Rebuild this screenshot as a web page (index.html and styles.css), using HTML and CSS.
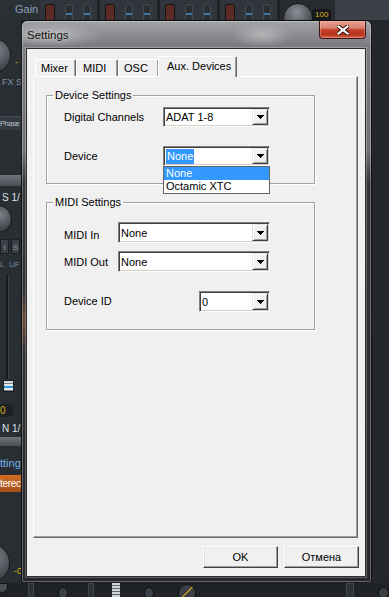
FILE: index.html
```html
<!DOCTYPE html>
<html lang="ru">
<head>
    <meta charset="UTF-8">
    <meta name="viewport" content="width=device-width, initial-scale=1.0">
    <title>Settings</title>
    <link rel="stylesheet" href="styles.css">
</head>
<body>
    <div class="mixer">
        <div class="top-strip">
            <span class="gain">Gain</span>
            <div class="chan"><i class="rec"></i><i class="fader"></i><i class="fader"></i></div>
            <div class="chan"><i class="rec"></i><i class="fader"></i><i class="fader"></i></div>
            <div class="chan"><i class="rec"></i><i class="fader"></i><i class="fader"></i></div>
            <div class="chan"><i class="rec"></i><i class="fader"></i><i class="fader"></i></div>
            <div class="master"><i class="big-knob"></i><span class="readout">100</span></div>
            <div class="top-rest"></div>
        </div>

        <div class="left-strip">
            <div class="knob-row"><i class="knob k35"></i><span class="dash">-</span></div>
            <span class="lbl fx">FX S</span>
            <span class="phase">Phase</span>
            <i class="strip-head"></i>
            <span class="lbl ch-name">S 1/</span>
            <i class="knob k28"></i>
            <div class="mini-btns"><i>I</i><i>S</i></div>
            <span class="lbl tiny">L&nbsp;&nbsp;UF</span>
            <i class="groove"></i>
            <i class="thumb"></i>
            <span class="zero">0</span>
            <span class="lbl ch-name n1">N 1/</span>
            <i class="strip-head short"></i>
            <span class="link">tting</span>
            <span class="stereo">terec</span>
            <div class="knob-row last"><i class="knob k40"></i><span class="dash">-0</span></div>
        </div>

        <div class="right-strip">
            <i class="r-box"></i>
            <i class="r-led"></i>
            <i class="r-box small"></i>
        </div>

        <div class="bottom-strip">
            <i class="b-knob edge"></i>
            <i class="b-slot"></i>
            <i class="b-knob"></i>
            <i class="b-slot"></i>
            <i class="b-thumb"></i>
            <i class="b-knob"></i>
            <i class="b-knob big"></i>
            <i class="b-slot wide"></i>
            <i class="b-knob"></i>
        </div>
    </div>

    <div class="window">
        <div class="titlebar">
            <span class="title">Settings</span>
            <span class="close">
                <svg width="12" height="10" viewBox="0 0 12 10">
                    <path d="M1.5 1.5l9 7M10.5 1.5l-9 7" stroke="#3b1710" stroke-width="4.2" stroke-linecap="square"/>
                    <path d="M1.5 1.5l9 7M10.5 1.5l-9 7" stroke="#fff" stroke-width="2.2" stroke-linecap="square"/>
                </svg>
            </span>
        </div>

        <div class="client">
            <div class="tabs">
                <span class="tab">Mixer</span>
                <span class="tab midi">MIDI</span>
                <span class="tab">OSC</span>
                <span class="tab active">Aux. Devices</span>
            </div>

            <div class="panel">
                <fieldset class="group">
                    <legend>Device Settings</legend>
                    <div class="row first">
                        <label class="w99">Digital Channels</label>
                        <div class="combo w107">
                            <span class="value">ADAT 1-8</span>
                            <span class="drop"><svg width="7" height="4" viewBox="0 0 7 4"><path d="M0 0h7v1H0zM1 1h5v1H1zM2 2h3v1H2zM3 3h1v1H3z"/></svg></span>
                        </div>
                    </div>
                    <div class="row gap19">
                        <label class="w99">Device</label>
                        <div class="combo w107">
                            <span class="value"><span class="sel">None</span></span>
                            <span class="drop"><svg width="7" height="4" viewBox="0 0 7 4"><path d="M0 0h7v1H0zM1 1h5v1H1zM2 2h3v1H2zM3 3h1v1H3z"/></svg></span>
                            <div class="dropdown">
                                <div class="item hl">None</div>
                                <div class="item">Octamic XTC</div>
                            </div>
                        </div>
                    </div>
                </fieldset>

                <fieldset class="group midi-group">
                    <legend>MIDI Settings</legend>
                    <div class="row first13">
                        <label class="w54 low">MIDI In</label>
                        <div class="combo tall w152">
                            <span class="value">None</span>
                            <span class="drop"><svg width="7" height="4" viewBox="0 0 7 4"><path d="M0 0h7v1H0zM1 1h5v1H1zM2 2h3v1H2zM3 3h1v1H3z"/></svg></span>
                        </div>
                    </div>
                    <div class="row gap9">
                        <label class="w54 low1">MIDI Out</label>
                        <div class="combo tall w152">
                            <span class="value">None</span>
                            <span class="drop"><svg width="7" height="4" viewBox="0 0 7 4"><path d="M0 0h7v1H0zM1 1h5v1H1zM2 2h3v1H2zM3 3h1v1H3z"/></svg></span>
                        </div>
                    </div>
                    <div class="row gap19">
                        <label class="w135">Device ID</label>
                        <div class="combo tall w71">
                            <span class="value">0</span>
                            <span class="drop"><svg width="7" height="4" viewBox="0 0 7 4"><path d="M0 0h7v1H0zM1 1h5v1H1zM2 2h3v1H2zM3 3h1v1H3z"/></svg></span>
                        </div>
                    </div>
                </fieldset>
            </div>

            <div class="actions">
                <button class="btn">OK</button>
                <button class="btn">Отмена</button>
            </div>
        </div>
    </div>
</body>
</html>
```

FILE: styles.css
```css
* { box-sizing: border-box; }
body { margin: 0; width: 389px; height: 597px; overflow: hidden; position: relative; background: #23272c; font-family: "Liberation Sans", Arial, sans-serif; }
i { display: block; font-style: normal; }

/* mixer behind the dialog */
.mixer { display: grid; grid-template-columns: 21px 351px 17px; grid-template-rows: 20px 563px 14px; height: 597px; }

.top-strip { grid-column: 1 / -1; display: flex; background: #2b3035; overflow: hidden; }
.gain { width: 40px; padding: 3px 0 0 15px; font-size: 11px; line-height: 12px; color: #8aa0b9; }
.chan { width: 60px; display: flex; padding: 4px 0 0 5px; background: #30353b; border-right: 3px solid #1e2226; }
.rec { width: 10px; height: 20px; background: #5b2c27; border: 1px solid #141414; border-radius: 2px; }
.fader { width: 8px; height: 20px; margin-left: 10px; background: linear-gradient(#2a2f34 0, #2a2f34 8px, #3c78a0 8px, #3c78a0 10px, #2a2f34 10px); border: 1px solid #444b52; border-radius: 3px; }
.fader + .fader { margin-left: 10px; }
.master { width: 55px; display: flex; padding: 3px 0 0 3px; background: #272b30; }
.big-knob { width: 30px; height: 30px; border-radius: 50%; background: radial-gradient(circle at 45% 30%, #8c9197, #4b5056 60%, #2b2f33); border: 1px solid #15181b; }
.readout { margin: 6px 0 0 -1px; padding: 0 3px; height: 11px; font-size: 8px; line-height: 11px; color: #d9b21e; background: #16191c; border-radius: 3px 3px 0 0; }
.top-rest { flex: 1; background: #3c4147; }

.left-strip { display: flex; flex-direction: column; align-items: flex-start; overflow: hidden; background: #292e33; }
.knob { flex: none; border-radius: 50%; background: radial-gradient(circle at 60% 35%, #7b8086, #474c52 55%, #25292d); border: 1px solid #16191c; }
.knob-row { display: flex; margin-top: 18px; }
.k35 { width: 35px; height: 35px; margin-left: -24px; }
.dash { margin: 19px 0 0 4px; font-size: 9px; line-height: 10px; color: #d9b21e; }
.lbl { font-size: 10px; line-height: 11px; color: #7f93a8; padding-left: 3px; white-space: nowrap; }
.fx { margin-top: 4px; font-size: 9px; padding-left: 2px; }
.phase { margin-top: 28px; width: 21px; height: 14px; font-size: 7.5px; letter-spacing: -0.4px; line-height: 13px; color: #b9c2cb; background: #353b42; border-top: 1px solid #454c53; white-space: nowrap; }
.strip-head { margin-top: 45px; width: 21px; height: 12px; background: linear-gradient(#70767c, #484e54); }
.ch-name { margin-top: 6px; color: #dfe3e7; padding-left: 2px; }
.k28 { width: 28px; height: 28px; margin: 2px 0 0 -16px; }
.mini-btns { display: flex; gap: 2px; margin-top: 6px; }
.mini-btns i { width: 9px; height: 15px; font-size: 8px; line-height: 15px; text-align: center; color: #8f9aa6; background: #3a4046; border: 1px solid #1b1e22; }
.tiny { margin-top: 6px; font-size: 8px; line-height: 9px; color: #75889c; padding-left: 0; }
.groove { margin: 6px 0 0 6px; width: 3px; height: 117px; background: #171a1d; border-right: 1px solid #3a4046; }
.thumb { margin: 1px 0 0 3px; width: 11px; height: 13px; border: 1px solid #1a1d20; background: linear-gradient(#d8dcdf 0 2px, #7a8086 2px 3px, #e6e9eb 3px 5px, #2a9ad8 5px 7px, #e6e9eb 7px 9px, #7a8086 9px 10px, #cfd3d6 10px); }
.zero { margin-top: 12px; width: 14px; height: 13px; font-size: 10px; line-height: 13px; color: #d9b21e; background: #1d2024; border-radius: 0 6px 6px 0; }
.n1 { margin-top: 6px; }
.strip-head.short { margin-top: 3px; height: 10px; }
.link { margin-top: 10px; font-size: 11px; line-height: 14px; color: #72b1e8; white-space: nowrap; }
.stereo { margin-top: 5px; width: 21px; height: 17px; font-size: 10px; letter-spacing: -0.3px; line-height: 17px; color: #fff; background: linear-gradient(#d36d24, #a6501a); white-space: nowrap; }
.knob-row.last { margin-top: 51px; }
.k40 { width: 40px; height: 40px; margin-left: -30px; }
.knob-row.last .dash { margin: 23px 0 0 4px; }

.right-strip { display: flex; flex-direction: column; align-items: flex-end; background: #22262a; border-left: 4px solid #1a1d20; }
.r-box { margin-top: 450px; width: 9px; height: 28px; background: #353a40; border: 1px solid #17191c; border-radius: 3px 0 0 3px; }
.r-led { margin-top: 14px; width: 7px; height: 9px; background: #2e5e38; border-radius: 4px 0 0 4px; }
.r-box.small { margin-top: 14px; height: 18px; }

.bottom-strip { grid-column: 1 / -1; display: flex; align-items: flex-start; background: #1f2327; overflow: hidden; }
.b-knob { width: 12px; height: 12px; margin: 4px 0 0 24px; border-radius: 50%; background: #3b4046; border: 1px solid #111; }
.b-knob.edge { margin-left: -4px; width: 14px; height: 10px; margin-top: 0; border-radius: 0 0 8px 8px; background: #4a4f55; }
.b-knob.big { width: 20px; height: 18px; margin-top: 1px; background: linear-gradient(135deg, #3b4046 45%, #b8941c 46%, #b8941c 50%, #3b4046 51%); }
.b-slot { width: 6px; height: 14px; margin: 0 0 0 20px; background: #2c3136; border: 1px solid #3f454b; border-bottom: 0; }
.b-slot.wide { margin-left: 150px; width: 10px; }
.b-thumb { width: 9px; height: 14px; margin-left: 18px; background: repeating-linear-gradient(#d0d4d7 0 2px, #60666c 2px 3px); }

/* dialog window */
.window { position: absolute; left: 21px; top: 20px; width: 351px; height: 563px; display: flex; flex-direction: column; padding: 0 5px 5px 4px; border: 1px solid rgba(12, 12, 14, 0.9); border-radius: 6px 6px 2px 2px; box-shadow: inset 0 0 0 1px rgba(255, 255, 255, 0.3); background: radial-gradient(ellipse 50px 12px at 30px 14px, rgba(205, 205, 205, 0.7), transparent), radial-gradient(ellipse 30px 12px at 240px 14px, rgba(215, 215, 215, 0.55), transparent), radial-gradient(ellipse 8px 30px at 3px 300px, rgba(190, 110, 50, 0.45), transparent), linear-gradient(#a2a2a6 0, #7c7c82 24px, #707076 130px, #34343a 162px, #26262c 100%); }
.titlebar { height: 27px; flex: none; display: flex; align-items: center; justify-content: space-between; padding-left: 1px; }
.title { font-family: "Liberation Sans Narrow", "Liberation Sans", Arial, sans-serif; font-size: 11.5px; color: #111; text-shadow: 0 0 6px rgba(255, 255, 255, 0.6); }
.close { align-self: flex-start; width: 47px; height: 18px; display: flex; align-items: center; justify-content: center; border: 1px solid #3a1510; border-top: 0; border-radius: 0 0 4px 4px; box-shadow: inset 0 0 0 1px rgba(255, 200, 190, 0.35); background: linear-gradient(#e7a294 0, #d77f6c 42%, #c3402a 52%, #b8321f 80%, #d46a4c 100%); }

.client { flex: 1; display: flex; flex-direction: column; background: #f0f0f0; border: 1px solid #2c2c30; box-shadow: 0 0 0 1px rgba(255, 255, 255, 0.25); padding: 7px 7px 8px 6px; font-size: 11px; color: #000; }

.tabs { height: 20px; flex: none; display: flex; align-items: flex-end; padding-left: 2px; }
.tab { width: 41px; height: 17px; padding: 2px 0 0 5px; line-height: 13px; background: #f0f0f0; border: 1px solid #fff; border-bottom: 0; border-right-color: #696969; box-shadow: inset -1px 0 #a0a0a0; border-radius: 2px 2px 0 0; }
.tab.midi { width: 42px; padding-left: 6px; }
.tab.active { width: 79px; height: 21px; margin: 0 0 -1px -1px; padding: 3px 0 0 8px; position: relative; z-index: 1; }

.panel { flex: 1; border: 1px solid; border-color: #fff #696969 #696969 #fff; box-shadow: inset -1px -1px #a0a0a0; padding: 12px 0 0 12px; }

.group { margin: 0; width: 269px; min-width: 0; border: 1px solid #a0a0a0; box-shadow: 1px 1px #fff, inset 1px 1px #fff; padding: 0 0 17px 6px; }
.group legend { padding: 0 2px; font-size: 11px; line-height: 13px; }
.midi-group { margin-top: 12px; padding-bottom: 17px; }

.row { display: flex; align-items: center; margin-left: 11px; }
.row.first { margin-top: 5px; }
.row.first13 { margin-top: 13px; }
.row.gap19 { margin-top: 19px; }
.row.gap9 { margin-top: 8px; }
.row label { line-height: 13px; }
.row label.low { align-self: flex-start; padding-top: 7px; }
.row label.low1 { align-self: flex-start; padding-top: 5px; }
.w99 { width: 99px; }
.w54 { width: 54px; }
.w135 { width: 135px; }
.w107 { width: 107px; }
.w152 { width: 152px; }
.w71 { width: 71px; }

.combo { position: relative; height: 20px; display: flex; padding: 1px; background: #fff; border: 1px solid; border-color: #808080 #fff #fff #808080; box-shadow: inset 1px 1px #404040, inset -1px -1px #d4d0c8; }
.combo.tall { height: 21px; }
.value { flex: 1; display: flex; align-items: center; padding-left: 1px; line-height: 14px; white-space: nowrap; }
.sel { background: #3399ff; color: #fff; padding: 0 1px; line-height: 15px; }
.drop { width: 16px; display: flex; align-items: center; justify-content: center; background: #f0f0f0; border: 1px solid; border-color: #e3e3e3 #404040 #404040 #e3e3e3; box-shadow: inset 1px 1px #fff, inset -1px -1px #a0a0a0; }

.dropdown { position: absolute; left: -1px; top: calc(100% + 1px); width: 107px; z-index: 2; background: #fff; border: 1px solid #646464; }
.item { height: 13px; line-height: 13px; padding-left: 2px; }
.item.hl { background: #3399ff; color: #fff; }

.actions { flex: none; display: flex; justify-content: flex-end; gap: 6px; margin: 8px -1px 0 0; }
.btn { width: 75px; height: 22px; padding: 0; font-family: "Liberation Sans", Arial, sans-serif; font-size: 11px; color: #000; background: #f0f0f0; border: 1px solid; border-color: #fff #404040 #404040 #fff; box-shadow: inset -1px -1px #a0a0a0, inset 1px 1px #e3e3e3; }
```
